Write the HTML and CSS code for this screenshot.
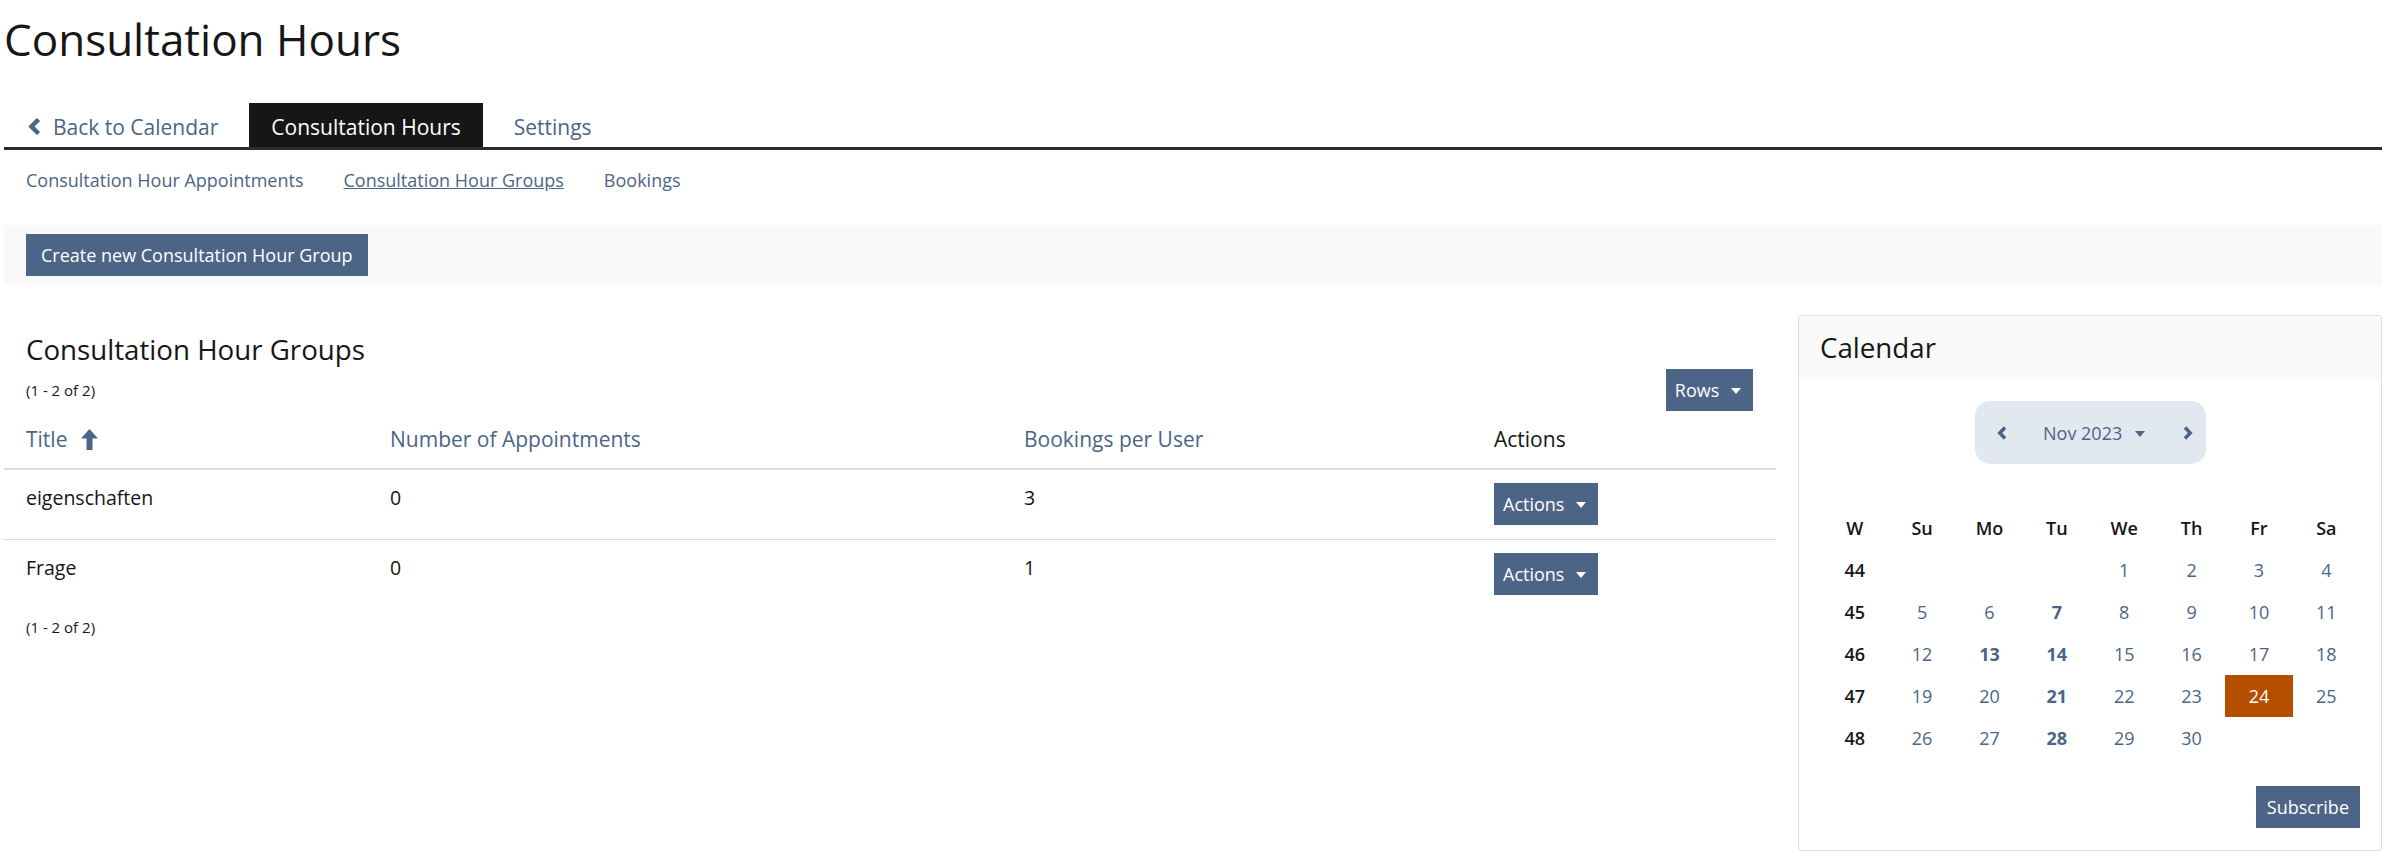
FILE: index.html
```html
<!DOCTYPE html>
<html lang="en">
<head>
    <meta charset="UTF-8">
    <title>Consultation Hours</title>
    <link rel="stylesheet" href="styles.css">
</head>
<body>

<div class="page">
    <h1 class="page-title">Consultation Hours</h1>

    <div class="tabs">
        <a class="tab tab-back" href="#">
            <svg class="icon-chevron" width="13" height="17" viewBox="0 0 13 17"><polyline points="10.5,1.5 3.5,8.5 10.5,15.5" /></svg>
            Back to Calendar
        </a>
        <a class="tab active" href="#">Consultation Hours</a>
        <a class="tab" href="#">Settings</a>
    </div>

    <div class="subtabs">
        <a href="#">Consultation Hour Appointments</a>
        <a href="#" class="current">Consultation Hour Groups</a>
        <a href="#">Bookings</a>
    </div>

    <div class="toolbar">
        <button class="btn">Create new Consultation Hour Group</button>
    </div>

    <div class="content">
        <div class="main-col">
            <h2 class="section-title">Consultation Hour Groups</h2>
            <div class="table-top">
                <span class="count">(1 - 2 of 2)</span>
                <button class="btn btn-drop">Rows <span class="caret"></span></button>
            </div>

            <table class="groups">
                <colgroup>
                    <col class="c-title">
                    <col class="c-num">
                    <col class="c-book">
                    <col class="c-act">
                </colgroup>
                <thead>
                    <tr>
                        <th><a href="#">Title</a>
                            <svg class="icon-arrow" width="17" height="21" viewBox="0 0 17 21"><path d="M8.5 0 L17 9.5 L11.5 9.5 L11.5 21 L5.5 21 L5.5 9.5 L0 9.5 Z" /></svg>
                        </th>
                        <th><a href="#">Number of Appointments</a></th>
                        <th><a href="#">Bookings per User</a></th>
                        <th class="plain">Actions</th>
                    </tr>
                </thead>
                <tbody>
                    <tr>
                        <td>eigenschaften</td>
                        <td>0</td>
                        <td>3</td>
                        <td><button class="btn btn-drop">Actions <span class="caret"></span></button></td>
                    </tr>
                    <tr>
                        <td>Frage</td>
                        <td>0</td>
                        <td>1</td>
                        <td><button class="btn btn-drop">Actions <span class="caret"></span></button></td>
                    </tr>
                </tbody>
            </table>
            <div class="count count-bottom">(1 - 2 of 2)</div>
        </div>

        <div class="side-col">
            <div class="panel">
                <div class="panel-head">Calendar</div>
                <div class="panel-body">
                    <div class="month-nav">
                        <svg class="nav-arrow" width="10" height="14" viewBox="0 0 10 14"><polyline points="8,1.5 2.8,7 8,12.5" /></svg>
                        <span class="month-label">Nov 2023 <span class="caret caret-lg"></span></span>
                        <svg class="nav-arrow" width="10" height="14" viewBox="0 0 10 14"><polyline points="2,1.5 7.2,7 2,12.5" /></svg>
                    </div>

                    <table class="cal">
                        <thead>
                            <tr><th>W</th><th>Su</th><th>Mo</th><th>Tu</th><th>We</th><th>Th</th><th>Fr</th><th>Sa</th></tr>
                        </thead>
                        <tbody>
                            <tr><td class="wk">44</td><td></td><td></td><td></td><td>1</td><td>2</td><td>3</td><td>4</td></tr>
                            <tr><td class="wk">45</td><td>5</td><td>6</td><td class="busy">7</td><td>8</td><td>9</td><td>10</td><td>11</td></tr>
                            <tr><td class="wk">46</td><td>12</td><td class="busy">13</td><td class="busy">14</td><td>15</td><td>16</td><td>17</td><td>18</td></tr>
                            <tr><td class="wk">47</td><td>19</td><td>20</td><td class="busy">21</td><td>22</td><td>23</td><td class="today">24</td><td>25</td></tr>
                            <tr><td class="wk">48</td><td>26</td><td>27</td><td class="busy">28</td><td>29</td><td>30</td><td></td><td></td></tr>
                        </tbody>
                    </table>

                    <div class="panel-foot">
                        <button class="btn">Subscribe</button>
                    </div>
                </div>
            </div>
        </div>
    </div>
</div>

</body>
</html>
```

FILE: styles.css
```css
body {
    margin: 0;
    font-family: "Open Sans", "Liberation Sans", sans-serif;
    color: #161616;
    background: #fff;
}
a {
    color: #4c6586;
    text-decoration: none;
}
.page {
    padding: 0 12px 0 4px;
}
.page-title {
    margin: 16px 0 0;
    font-size: 44px;
    font-weight: 400;
    line-height: 47px;
}

/* tabs */
.tabs {
    display: flex;
    margin-top: 40px;
    padding-left: 2px;
    border-bottom: 3px solid #2b2b2b;
}
.tab {
    display: flex;
    align-items: center;
    height: 44px;
    padding: 3px 22px 0;
    box-sizing: border-box;
    margin-right: 9px;
    font-size: 21px;
    color: #4c6586;
}
.tab.active {
    background: #161616;
    color: #fff;
}
.icon-chevron {
    margin-right: 12px;
    fill: none;
    stroke: #4c6586;
    stroke-width: 4.5;
}

.subtabs {
    display: flex;
    gap: 40px;
    margin-top: 15px;
    padding-left: 22px;
    line-height: 30px;
    font-size: 18px;
}
.subtabs a.current {
    text-decoration: underline;
}

.toolbar {
    margin-top: 30px;
    background: #f9f9f9;
    padding: 9px 22px;
}

.btn {
    font-family: inherit;
    font-size: 18px;
    height: 42px;
    line-height: 42px;
    padding: 0 15px;
    border: none;
    border-radius: 0;
    background: #4c6586;
    color: #fff;
    cursor: pointer;
}
.btn-drop {
    padding: 0 12px 0 9px;
}
.caret {
    display: inline-block;
    vertical-align: middle;
    margin-left: 7px;
    margin-top: -2px;
    border-top: 6px solid;
    border-left: 5px solid transparent;
    border-right: 5px solid transparent;
}
.caret-lg {
    margin-left: 8px;
    border-left-width: 5.5px;
    border-right-width: 5.5px;
}

/* content columns */
.content {
    display: flex;
    gap: 22px;
    margin-top: 30px;
}
.main-col {
    flex: 1;
}
.side-col {
    width: 584px;
}

.section-title {
    margin: 18px 0 0;
    padding-left: 22px;
    font-size: 27.7px;
    font-weight: 400;
    line-height: 32px;
}
.table-top {
    display: flex;
    justify-content: space-between;
    align-items: center;
    margin-top: 4px;
    padding: 0 23px 0 22px;
}
.count {
    font-size: 15px;
    line-height: 20px;
}
.count-bottom {
    margin-top: 8px;
    padding-left: 22px;
}

table.groups {
    width: 100%;
    border-collapse: collapse;
    table-layout: fixed;
    font-size: 19.5px;
}
.c-title { width: 364px; }
.c-num { width: 634px; }
.c-book { width: 470px; }
.groups th {
    text-align: left;
    font-weight: 400;
    font-size: 21px;
    padding: 13px 22px 14px;
    line-height: 30px;
    border-bottom: 2px solid #dddddd;
}
.groups th.plain {
    color: #161616;
}
.icon-arrow {
    fill: #4c6586;
    vertical-align: -3px;
    margin-left: 8px;
}
.groups td {
    vertical-align: top;
    padding: 13px 22px 14px;
    line-height: 30px;
}
.groups tbody tr + tr td {
    border-top: 1px solid #dddddd;
}

/* calendar panel */
.panel {
    border: 1px solid #dddddd;
    border-radius: 3px;
}
.panel-head {
    background: #f9f9f9;
    padding: 0 21px;
    font-size: 27.7px;
    font-weight: 400;
    line-height: 63px;
}
.panel-body {
    padding: 22px 21px 22px 22px;
}
.month-nav {
    display: flex;
    align-items: center;
    width: 231px;
    height: 63px;
    margin: 0 auto;
    box-sizing: border-box;
    padding-left: 22px;
    background: #e2e8ef;
    border-radius: 15px;
}
.nav-arrow {
    fill: none;
    stroke: #4c6586;
    stroke-width: 3.5;
}
.month-label {
    margin: 0 38px 0 36px;
    font-size: 18px;
    color: #4c6586;
}

table.cal {
    width: 539px;
    margin-top: 43px;
    border-collapse: collapse;
    table-layout: fixed;
    font-size: 18px;
    text-align: center;
}
.cal th {
    height: 42px;
    padding: 0;
    font-weight: 600;
}
.cal td {
    height: 42px;
    padding: 0;
    color: #4c6586;
}
.cal td.wk {
    color: #161616;
    font-weight: 600;
}
.cal td.busy {
    font-weight: 700;
}
.cal td.today {
    background: #b54f00;
    color: #fff;
}
.panel-foot {
    display: flex;
    justify-content: flex-end;
    margin-top: 27px;
}
.panel-foot .btn {
    padding: 0 11px;
}
```
